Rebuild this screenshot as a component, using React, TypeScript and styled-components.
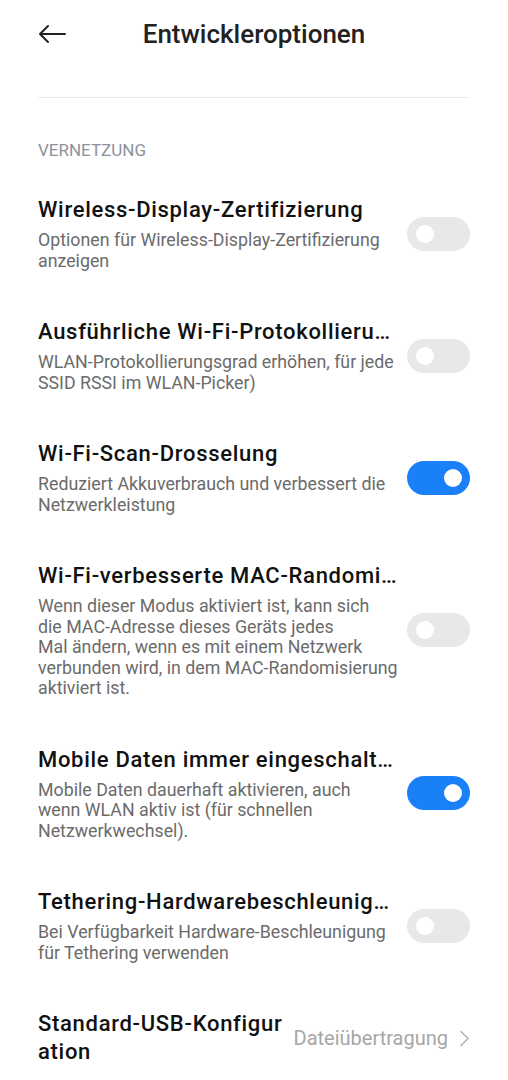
import React from 'react';
import styled, { createGlobalStyle } from 'styled-components';

const GlobalStyle = createGlobalStyle`
  html, body {
    margin: 0;
    padding: 0;
    background: #ffffff;
  }
  body {
    font-family: Roboto, "Noto Sans", "Liberation Sans", sans-serif;
    -webkit-font-smoothing: antialiased;
  }
`;

const Screen = styled.div`
  width: 508px;
  min-height: 1080px;
  padding: 0 38px;
  box-sizing: border-box;
  background: #ffffff;
  overflow: hidden;
`;

const Header = styled.header`
  display: grid;
  grid-template-columns: 1fr auto 1fr;
  align-items: center;
  height: 68px;
`;

const BackButton = styled.button`
  justify-self: start;
  display: flex;
  align-items: center;
  padding: 0;
  border: none;
  background: none;
  color: #222222;
  cursor: pointer;
`;

const Title = styled.h1`
  margin: 0;
  font-size: 26px;
  font-weight: 500;
  color: #222222;
`;

const Divider = styled.div`
  height: 1px;
  margin-top: 29px;
  background: #ebebeb;
`;

const SectionLabel = styled.div`
  margin-top: 42px;
  font-size: 17px;
  line-height: 20px;
  color: #8c919c;
  text-transform: uppercase;
`;

const List = styled.div`
  display: flex;
  flex-direction: column;
  margin-top: 12px;
`;

const Row = styled.div`
  display: flex;
  align-items: center;
  gap: 10px;
  padding: 24px 0 23px;
`;

const Texts = styled.div`
  flex: 1;
  min-width: 0;
  display: flex;
  flex-direction: column;
  gap: 6px;
`;

const ItemTitle = styled.div<{ $wrap?: boolean }>`
  font-size: 22px;
  line-height: 28px;
  font-weight: 500;
  letter-spacing: 0.7px;
  color: #111111;
  ${(p) =>
    p.$wrap
      ? 'word-break: break-all;'
      : 'white-space: nowrap; overflow: hidden; text-overflow: ellipsis;'}
`;

const Subtitle = styled.div`
  font-size: 17.8px;
  line-height: 20.5px;
  color: #6b6b6b;
  white-space: nowrap;
`;

const Track = styled.div<{ $on: boolean }>`
  flex: none;
  position: relative;
  width: 63px;
  height: 34px;
  border-radius: 17px;
  background: ${(p) => (p.$on ? '#1a80f7' : '#e8e8e8')};
`;

const Knob = styled.span<{ $on: boolean }>`
  position: absolute;
  top: 8px;
  ${(p) => (p.$on ? 'right: 8px;' : 'left: 9px;')}
  width: 18px;
  height: 18px;
  border-radius: 50%;
  background: #ffffff;
`;

const ValueBox = styled.div`
  flex: none;
  display: flex;
  align-items: center;
  gap: 11px;
`;

const Value = styled.span`
  font-size: 20px;
  color: #a6a6a6;
`;

type Item = {
  title: string;
  lines?: string[];
  on?: boolean;
  value?: string;
};

const items: Item[] = [
  {
    title: 'Wireless-Display-Zertifizierung',
    lines: ['Optionen für Wireless-Display-Zertifizierung', 'anzeigen'],
    on: false,
  },
  {
    title: 'Ausführliche Wi-Fi-Protokollierung',
    lines: ['WLAN-Protokollierungsgrad erhöhen, für jede', 'SSID RSSI im WLAN-Picker)'],
    on: false,
  },
  {
    title: 'Wi-Fi-Scan-Drosselung',
    lines: ['Reduziert Akkuverbrauch und verbessert die', 'Netzwerkleistung'],
    on: true,
  },
  {
    title: 'Wi-Fi-verbesserte MAC-Randomisierung',
    lines: [
      'Wenn dieser Modus aktiviert ist, kann sich',
      'die MAC-Adresse dieses Geräts jedes',
      'Mal ändern, wenn es mit einem Netzwerk',
      'verbunden wird, in dem MAC-Randomisierung',
      'aktiviert ist.',
    ],
    on: false,
  },
  {
    title: 'Mobile Daten immer eingeschaltet',
    lines: [
      'Mobile Daten dauerhaft aktivieren, auch',
      'wenn WLAN aktiv ist (für schnellen',
      'Netzwerkwechsel).',
    ],
    on: true,
  },
  {
    title: 'Tethering-Hardwarebeschleunigung',
    lines: ['Bei Verfügbarkeit Hardware-Beschleunigung', 'für Tethering verwenden'],
    on: false,
  },
  {
    title: 'Standard-USB-Konfiguration',
    value: 'Dateiübertragung',
  },
];

const BackArrow = () => (
  <svg width="28" height="20" viewBox="0 0 28 20" fill="none">
    <path
      d="M27 10H2M10 2L2 10L10 18"
      stroke="currentColor"
      strokeWidth="2"
      strokeLinecap="round"
      strokeLinejoin="round"
    />
  </svg>
);

const Chevron = () => (
  <svg width="11" height="17" viewBox="0 0 11 17" fill="none">
    <path d="M2 1.5L9 8.5L2 15.5" stroke="#b3b3b3" strokeWidth="1.6" strokeLinecap="round" strokeLinejoin="round" />
  </svg>
);

const SettingRow: React.FC<{ item: Item }> = ({ item }) => (
  <Row>
    <Texts>
      <ItemTitle $wrap={!!item.value}>{item.title}</ItemTitle>
      {item.lines && (
        <Subtitle>
          {item.lines.map((line, i) => (
            <React.Fragment key={i}>
              {i > 0 && <br />}
              {line}
            </React.Fragment>
          ))}
        </Subtitle>
      )}
    </Texts>
    {item.value ? (
      <ValueBox>
        <Value>{item.value}</Value>
        <Chevron />
      </ValueBox>
    ) : (
      <Track $on={!!item.on}>
        <Knob $on={!!item.on} />
      </Track>
    )}
  </Row>
);

const App: React.FC = () => (
  <>
    <GlobalStyle />
    <Screen>
      <Header>
        <BackButton aria-label="Zurück">
          <BackArrow />
        </BackButton>
        <Title>Entwickleroptionen</Title>
        <span />
      </Header>
      <Divider />
      <SectionLabel>Vernetzung</SectionLabel>
      <List>
        {items.map((item) => (
          <SettingRow key={item.title} item={item} />
        ))}
      </List>
    </Screen>
  </>
);

export default App;
